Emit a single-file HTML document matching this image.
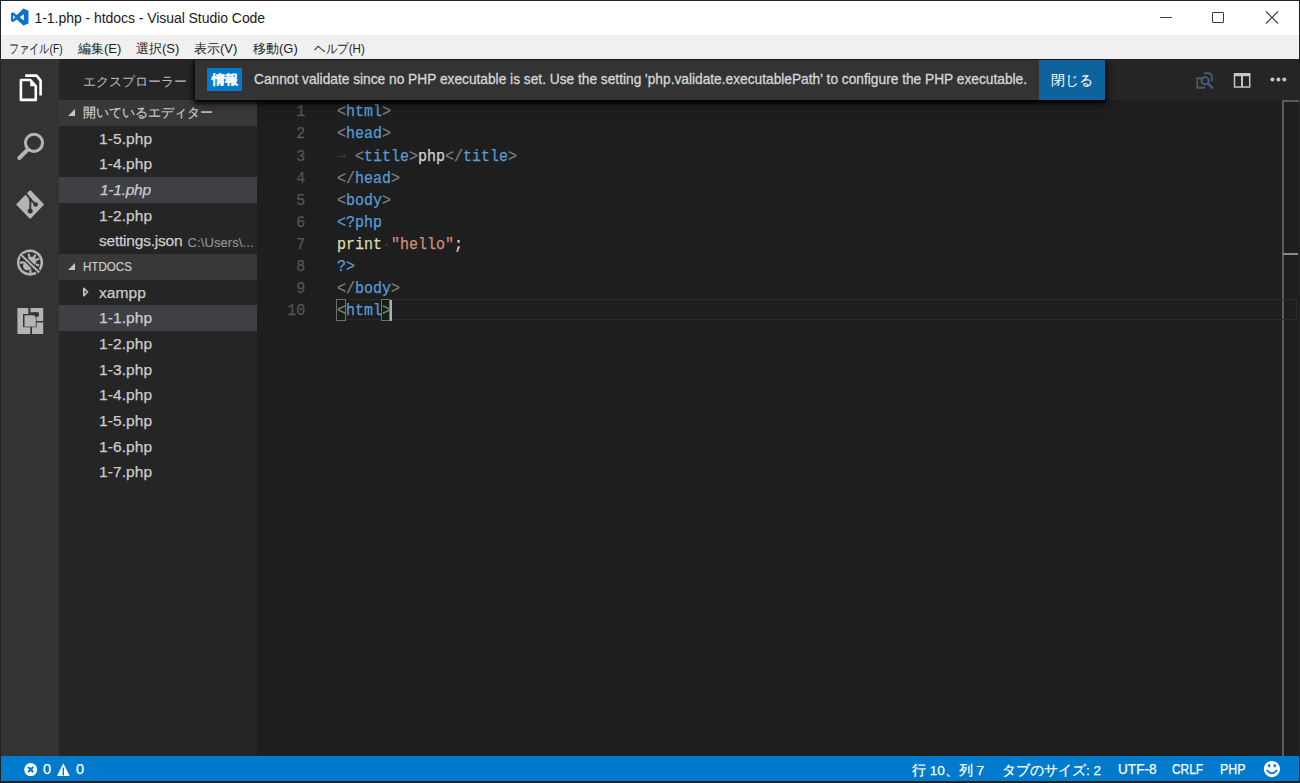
<!DOCTYPE html>
<html><head><meta charset="utf-8">
<style>
*{margin:0;padding:0;box-sizing:border-box}
html,body{width:1300px;height:783px;overflow:hidden;background:#232323;font-family:"Liberation Sans",sans-serif}
.a{position:absolute}
.t{position:absolute;white-space:nowrap;line-height:1}
#title{left:1px;top:1px;width:1298px;height:34px;background:#fff}
#menu{left:1px;top:35px;width:1298px;height:24px;background:#f0f0f0;z-index:5}
#act{left:1px;top:59px;width:58px;height:697px;background:#333}
#side{left:59px;top:59px;width:198px;height:697px;background:#252526}
#edtitle{left:257px;top:59px;width:1042px;height:41px;background:#252526}
#editor{left:257px;top:100px;width:1042px;height:656px;background:#1e1e1e}
#status{left:1px;top:756px;width:1298px;height:25.4px;background:#007acc}
.menu span{position:absolute;z-index:6;top:40px;font-size:13px;color:#222;transform-origin:0 0}
.hdr{position:absolute;left:59px;width:198px;height:25.67px;background:#383838}
.hdr .tri{position:absolute;left:9px;top:8.5px;width:0;height:0;border-left:7px solid transparent;border-bottom:7px solid #c5c5c5}
.hdr span{position:absolute;left:24px;top:4.8px;font-size:12.5px;color:#cccccc;-webkit-text-stroke-width:0.2px}
.row{position:absolute;left:59px;width:198px;height:25.67px}
.row span{position:absolute;left:40px;top:4.1px;font-size:15.5px;letter-spacing:0.1px;color:#cccccc;white-space:nowrap;-webkit-text-stroke-width:0.25px}
.sel{background:#3f3f46}
.code{position:absolute;left:337px;font-family:"Liberation Mono",monospace;font-size:16.5px;white-space:pre;color:#d4d4d4;line-height:22.07px;height:22.07px;transform:translateY(0.8px) scaleX(0.9091);transform-origin:0 0;-webkit-text-stroke-width:0.25px}
.ln{position:absolute;left:257px;width:53px;text-align:right;font-family:"Liberation Mono",monospace;font-size:16.5px;color:#555555;line-height:22.07px;transform:translateY(1.4px) scaleX(0.9091);transform-origin:0 0;-webkit-text-stroke-width:0.25px}
.p{color:#808080}.g{color:#569cd6}.s{color:#ce9178}.f{color:#dcdcaa}.w{color:#424242;-webkit-text-stroke-width:0}
.st{position:absolute;top:761.3px;font-size:14.5px;color:#fff;white-space:nowrap;transform-origin:0 0;-webkit-text-stroke-width:0.25px}
</style></head><body>
<div id="title" class="a"></div>
<div id="menu" class="a"></div>
<div id="act" class="a"></div>
<div id="side" class="a"></div>
<div id="edtitle" class="a"></div>
<div id="editor" class="a"></div>
<div id="status" class="a"></div>

<!-- title bar -->
<svg class="a" style="left:8px;top:6px" width="24" height="22" viewBox="8 6 24 22">
<path fill="#0e72c4" fill-rule="evenodd" d="M23.4 8.5 L28.5 10.7 V23.4 L23.4 25.6 L16.8 19.4 L13.2 22.1 L11 21.2 V13.3 L13.2 12.3 L16.8 15.1 Z M23.8 13.9 L19.8 17.25 L23.8 20.6 Z M13.2 15.1 V19.4 L15.1 17.25 Z"/>
</svg>
<span class="t" style="left:34.5px;top:11.2px;font-size:14px;letter-spacing:-0.05px;color:#1a1a1a">1-1.php - htdocs - Visual Studio Code</span>
<div class="a" style="left:1160.4px;top:17.4px;width:11.6px;height:1.1px;background:#444"></div>
<div class="a" style="left:1212.3px;top:11.5px;width:12px;height:11.8px;border:1.1px solid #3a3a3a;border-radius:1px"></div>
<svg class="a" style="left:1265px;top:11px" width="14" height="14" viewBox="0 0 14 14"><path d="M1 0.5 L13 12.5 M13 0.5 L1 12.5" stroke="#3a3a3a" stroke-width="1.1"/></svg>

<!-- menu -->
<div class="menu">
<span style="left:8.5px;transform:scaleX(0.78)">ファイル(F)</span>
<span style="left:78px">編集(E)</span>
<span style="left:136px">選択(S)</span>
<span style="left:194px">表示(V)</span>
<span style="left:253px">移動(G)</span>
<span style="left:313.5px;transform:scaleX(0.89)">ヘルプ(H)</span>
</div>

<!-- activity bar icons -->
<svg class="a" style="left:0;top:59px" width="59" height="300" viewBox="0 59 59 300">
 <!-- files -->
 <g fill="none" stroke="#fff" stroke-width="2.6" stroke-linejoin="round">
  <path d="M20.9 80 V99.9 H35.8 V86 L30.4 80 Z"/>
  <path d="M25.2 75.6 H36.6 L40.6 80.6 V95.4"/>
 </g>
 <path fill="#fff" d="M30.2 79.5 L36.5 86.2 H30.2 Z"/>
 <!-- search -->
 <g fill="none" stroke="#b4b4b4">
  <circle cx="34" cy="142.8" r="8.6" stroke-width="3"/>
  <path d="M27.2 150.2 L19.3 158" stroke-width="4" stroke-linecap="round"/>
 </g>
 <!-- git -->
 <path fill="#b4b4b4" stroke="#b4b4b4" stroke-width="2.4" stroke-linejoin="round" d="M30.2 191.6 L42.6 204.5 L30.2 217.4 L17.6 204.5 Z"/>
 <g fill="#333">
  <path d="M25.6 193.2 L30.6 199.4 M30.4 199.8 L30.2 211 M30.6 199.8 L35.5 204.4" stroke="#333" stroke-width="1.9" fill="none"/>
  <circle cx="35.6" cy="204.5" r="2.3"/>
  <circle cx="30.2" cy="211" r="2.5"/>
  <circle cx="30.4" cy="199.6" r="1.5"/>
 </g>
 <!-- debug -->
 <circle cx="30" cy="262.6" r="11.85" fill="none" stroke="#b4b4b4" stroke-width="2.5"/>
 <g stroke="#b4b4b4" stroke-width="2.1" fill="none">
  <path d="M28.6 253.6 L29.6 258.2"/>
  <path d="M35.6 254.8 L33.6 257.6"/>
  <path d="M39.2 258.6 L36 260"/>
  <path d="M39.2 265.6 L35.8 264.4"/>
  <path d="M19.8 262.6 L25 262.4"/>
  <path d="M30.6 273.4 L30.3 269.4"/>
 </g>
 <ellipse cx="30.2" cy="263" rx="7.3" ry="5" transform="rotate(-45 30.2 263)" fill="#b4b4b4"/>
 <circle cx="27.2" cy="266" r="4.2" fill="#b4b4b4"/>
 <path d="M21.4 255.2 L38.6 272" stroke="#333" stroke-width="4.6"/>
 <path d="M20.8 254.6 L39.2 272.6" stroke="#b4b4b4" stroke-width="2.1"/>
 <!-- extensions -->
 <path fill="#b4b4b4" d="M17.4 308 H28.4 V314 H23 V327.2 H30.3 V334 H17.4 Z"/>
 <path fill="#b4b4b4" d="M30.4 308 H43.2 V321 H36.5 V312.3 H30.4 Z"/>
 <path fill="#b4b4b4" d="M36.6 322.6 H43.2 V334 H32 V327.2 H36.6 Z"/>
 <rect x="24.5" y="315.3" width="11.3" height="11.3" fill="#b4b4b4"/>
 <rect x="34.5" y="312.3" width="4.4" height="4.3" fill="#333"/>
</svg>

<!-- sidebar -->
<span class="t" style="left:83px;top:75px;font-size:13px;color:#bbbbbb">エクスプローラー</span>
<div class="hdr" style="top:100px"><div class="tri"></div><span>開いているエディター</span></div>
<div class="row" style="top:125.67px"><span>1-5.php</span></div>
<div class="row" style="top:151.33px"><span>1-4.php</span></div>
<div class="row sel" style="top:177px"><span style="font-style:italic;letter-spacing:-0.25px;left:41px">1-1.php</span></div>
<div class="row" style="top:202.67px"><span>1-2.php</span></div>
<div class="row" style="top:228.33px"><span style="letter-spacing:-0.22px">settings.json</span><span style="left:128.5px;top:6.8px;font-size:13px;letter-spacing:0.1px;color:#969696;-webkit-text-stroke-width:0.1px">C:\Users\...</span></div>
<div class="hdr" style="top:254px"><div class="tri"></div><span style="font-size:13px;top:5px;transform:scaleX(0.89);transform-origin:0 0">HTDOCS</span></div>
<div class="row" style="top:279.67px"><svg class="a" style="left:23px;top:6px" width="8" height="12" viewBox="0 0 8 12"><path d="M1.8 2.2 L5.6 6 L1.8 9.8 Z" fill="none" stroke="#c5c5c5" stroke-width="1.6" stroke-linejoin="round"/></svg><span>xampp</span></div>
<div class="row sel" style="top:305.33px"><span>1-1.php</span></div>
<div class="row" style="top:331px"><span>1-2.php</span></div>
<div class="row" style="top:356.67px"><span>1-3.php</span></div>
<div class="row" style="top:382.33px"><span>1-4.php</span></div>
<div class="row" style="top:408px"><span>1-5.php</span></div>
<div class="row" style="top:433.67px"><span>1-6.php</span></div>
<div class="row" style="top:459.33px"><span>1-7.php</span></div>

<!-- editor toolbar icons -->
<svg class="a" style="left:1190px;top:65px" width="110" height="30" viewBox="1190 65 110 30">
 <path d="M1203.5 78.2 H1197.2 V87.8 H1205" fill="none" stroke="#575757" stroke-width="1.9" stroke-linejoin="round"/>
 <path d="M1204 73.2 H1209.5 L1211.8 75.5 V81.5" fill="none" stroke="#575757" stroke-width="1.9" stroke-linejoin="round"/>
 <circle cx="1205.1" cy="80.7" r="3.6" fill="none" stroke="#3f6285" stroke-width="1.9"/>
 <path d="M1207.8 83.5 L1212.3 87.8" stroke="#3f6285" stroke-width="2.2" stroke-linecap="round"/>
 <rect x="1234.5" y="73.8" width="15.2" height="13.2" fill="none" stroke="#c5c5c5" stroke-width="1.5"/>
 <rect x="1234" y="73.2" width="16.2" height="3" fill="#c5c5c5"/>
 <rect x="1241" y="74" width="2" height="13" fill="#c5c5c5"/>
 <circle cx="1272.4" cy="79.5" r="2" fill="#c5c5c5"/>
 <circle cx="1278.4" cy="79.5" r="2" fill="#c5c5c5"/>
 <circle cx="1284.3" cy="79.5" r="2" fill="#c5c5c5"/>
</svg>

<!-- editor -->
<div class="a" style="left:1282px;top:100px;width:2px;height:656px;background:#5a5a5a"></div>
<div class="a" style="left:1282px;top:100px;width:17px;height:2px;background:#5a5a5a"></div>
<div class="a" style="left:1283px;top:252.5px;width:15px;height:2px;background:#8a8a8a"></div>
<div class="a" style="left:337px;top:299px;width:960px;height:21.2px;border:1.2px solid #2a2a2a"></div>

<div class="ln" style="top:100.40px">1</div>
<div class="ln" style="top:122.47px">2</div>
<div class="ln" style="top:144.54px">3</div>
<div class="ln" style="top:166.61px">4</div>
<div class="ln" style="top:188.68px">5</div>
<div class="ln" style="top:210.75px">6</div>
<div class="ln" style="top:232.82px">7</div>
<div class="ln" style="top:254.89px">8</div>
<div class="ln" style="top:276.96px">9</div>
<div class="ln" style="top:299.03px">10</div>

<div class="code" style="top:100.40px"><span class="p">&lt;</span><span class="g">html</span><span class="p">&gt;</span></div>
<div class="code" style="top:122.47px"><span class="p">&lt;</span><span class="g">head</span><span class="p">&gt;</span></div>
<div class="code" style="top:144.54px"><span class="w" style="position:relative;top:-2px">→ </span><span class="p">&lt;</span><span class="g">title</span><span class="p">&gt;</span>php<span class="p">&lt;/</span><span class="g">title</span><span class="p">&gt;</span></div>
<div class="code" style="top:166.61px"><span class="p">&lt;/</span><span class="g">head</span><span class="p">&gt;</span></div>
<div class="code" style="top:188.68px"><span class="p">&lt;</span><span class="g">body</span><span class="p">&gt;</span></div>
<div class="code" style="top:210.75px"><span class="g">&lt;?php</span></div>
<div class="code" style="top:232.82px"><span class="f">print</span><span class="w">·</span><span class="s">"hello"</span>;</div>
<div class="code" style="top:254.89px"><span class="g">?&gt;</span></div>
<div class="code" style="top:276.96px"><span class="p">&lt;/</span><span class="g">body</span><span class="p">&gt;</span></div>
<div class="a" style="left:336.4px;top:299px;width:9.2px;height:21.8px;background:#142014;border:1.3px solid #707070"></div>
<div class="a" style="left:380.9px;top:299px;width:9.2px;height:21.8px;background:#142014;border:1.3px solid #707070"></div>
<div class="code" style="top:299.03px"><span class="p">&lt;</span><span class="g">html</span><span class="p">&gt;</span></div>
<div class="a" style="left:389.5px;top:299.5px;width:2.5px;height:21px;background:#aeafad"></div>

<!-- notification -->
<div class="a" style="left:195px;top:60px;width:910px;height:40px;background:#333;box-shadow:0 2px 4px 1px rgba(0,0,0,0.9), 0 3px 9px rgba(0,0,0,0.5)"></div>
<div class="a" style="left:207px;top:68px;width:35px;height:23px;background:#007acc"></div>
<span class="t" style="left:212px;top:74px;font-size:12.5px;font-weight:bold;color:#f4f8fc;-webkit-text-stroke-width:0.4px">情報</span>
<span class="t" style="left:254px;top:72.3px;font-size:14.5px;color:#d6d6d6;-webkit-text-stroke:0.3px #d6d6d6;transform:scaleX(0.9465);transform-origin:0 0">Cannot validate since no PHP executable is set. Use the setting 'php.validate.executablePath' to configure the PHP executable.</span>
<div class="a" style="left:1039px;top:60px;width:66px;height:40px;background:#0e639c"></div>
<span class="t" style="left:1051px;top:73px;font-size:14px;color:#fff">閉じる</span>

<!-- status bar -->
<svg class="a" style="left:23px;top:762px" width="50" height="16" viewBox="23 762 50 16">
 <circle cx="30.7" cy="769.6" r="6.5" fill="#fff"/>
 <path d="M28.2 766.9 L33.2 772.1 M33.2 766.9 L28.2 772.1" stroke="#007acc" stroke-width="2.1"/>
 <path d="M63.3 763.3 L69.7 776 H57 Z" fill="#fff"/>
 <rect x="62.6" y="767.5" width="1.4" height="8" fill="#007acc"/>
</svg>
<span class="st" style="left:43px">0</span>
<span class="st" style="left:76px">0</span>
<span class="st" style="left:912px;top:762px;font-size:13.5px">行 10、列 7</span>
<span class="st" style="left:1002px;top:762px;font-size:13.5px">タブのサイズ: 2</span>
<span class="st" style="left:1117.5px;transform:scaleX(0.94)">UTF-8</span>
<span class="st" style="left:1171.5px;transform:scaleX(0.82)">CRLF</span>
<span class="st" style="left:1219.7px;transform:scaleX(0.86)">PHP</span>
<svg class="a" style="left:1263px;top:761px" width="18" height="18" viewBox="0 0 18 18">
 <circle cx="8.9" cy="8.1" r="8.1" fill="#fff"/>
 <ellipse cx="6.1" cy="4.8" rx="1.35" ry="1.75" fill="#1783d0"/>
 <ellipse cx="11.8" cy="4.8" rx="1.35" ry="1.75" fill="#1783d0"/>
 <path d="M4.3 9.6 Q8.9 14.9 13.5 9.6" fill="none" stroke="#1a86d2" stroke-width="2.1" stroke-linecap="round"/>
</svg>
</body></html>
